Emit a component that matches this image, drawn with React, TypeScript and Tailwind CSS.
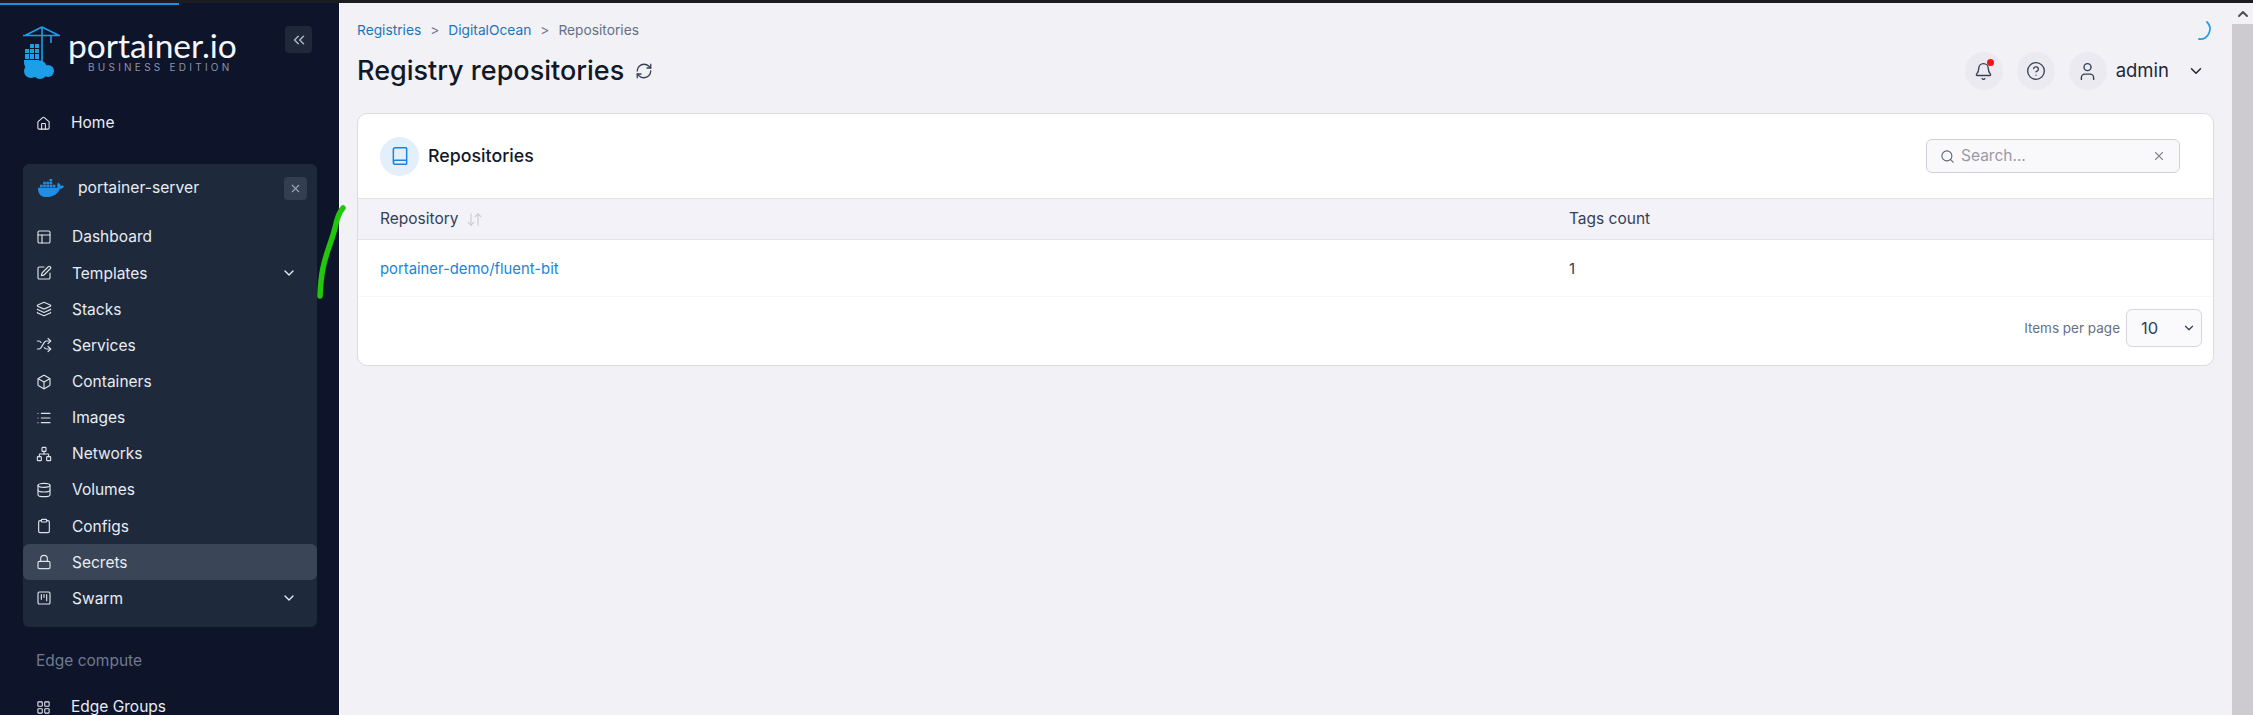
import React from "react";
import { Home, PanelsTopLeft, SquarePen, Layers, Shuffle, Box, List, Network, Database, Clipboard, Lock, SquareKanban, LayoutGrid, Book, RefreshCw, Bell, CircleHelp, User, ChevronDown, ChevronUp, Search, X, ChevronsLeft, ArrowDownUp } from "lucide-react";
import { FaDocker } from "react-icons/fa";

const items = [
  { label: "Dashboard", Icon: PanelsTopLeft },
  { label: "Templates", Icon: SquarePen, chevron: true },
  { label: "Stacks", Icon: Layers },
  { label: "Services", Icon: Shuffle },
  { label: "Containers", Icon: Box },
  { label: "Images", Icon: List },
  { label: "Networks", Icon: Network },
  { label: "Volumes", Icon: Database },
  { label: "Configs", Icon: Clipboard },
  { label: "Secrets", Icon: Lock, active: true },
  { label: "Swarm", Icon: SquareKanban, chevron: true },
];

function Logo() {
  return (
    <svg width="40" height="54" viewBox="0 0 40 54" className="shrink-0">
      <g stroke="#1d9fe8" strokeWidth="1.6" fill="none">
        <path d="M1 10.5H38M20 2V36M20 2L3 10.5M20 2L37 10.5M29 10V18" />
      </g>
      <g fill="#1d9fe8">
        <rect x="3" y="24" width="4" height="4" /><rect x="8" y="24" width="4" height="4" />
        <rect x="8" y="19" width="4" height="4" /><rect x="3" y="29" width="4" height="5" />
        <rect x="8" y="29" width="4" height="5" /><rect x="13" y="29" width="4" height="5" />
        <rect x="13" y="24" width="4" height="4" /><rect x="13" y="19" width="4" height="4" />
        <path d="M2 35h15v5a7 7 0 0 1-12 3c-3-1-3-5-3-8z" />
        <circle cx="18" cy="42" r="6.5" /><circle cx="9" cy="46" r="7" /><circle cx="18" cy="47" r="7" /><circle cx="26" cy="46" r="6" />
      </g>
    </svg>
  );
}

export default function App() {
  return (
    <div className="relative flex h-[715px] w-[2253px] flex-col overflow-hidden bg-[#f2f1f6] font-['Inter',sans-serif]">
      <div className="h-[3px] shrink-0 bg-[#1b1b20]" />
      <div className="flex min-h-0 flex-1">
        <aside className="relative w-[339px] shrink-0 overflow-hidden bg-[#0e152a] text-[#e8ecf3]">
          <div className="absolute left-0 top-0 h-[2px] w-[179px] bg-[#1d8fe0]" />
          <div className="flex h-[80px] items-start pl-[22px] pt-[22px]">
            <Logo />
            <div className="ml-[6px] flex w-[176px] flex-col">
              <span className="mt-[3px] font-['Lato',sans-serif] text-[33.5px] leading-[34px] text-[#f4f6fa]">portainer.io</span>
              <span className="ml-[20px] mt-[-1px] text-[10px] leading-[12px] tracking-[3.25px] text-[#8b93a7]">BUSINESS EDITION</span>
            </div>
            <button className="ml-[41px] mt-[1px] flex h-[27px] w-[27px] items-center justify-center rounded-[4px] bg-[#1f2838] text-[#aab2c2]"><ChevronsLeft size={18} /></button>
          </div>
          <div className="mt-[22px] flex h-[36px] items-center pl-[36px] text-[15.5px]">
            <Home size={15} strokeWidth={1.7} />
            <span className="ml-[20px]">Home</span>
          </div>
          <div className="mx-[23px] mt-[23px] h-[463px] w-[294px] rounded-[6px] bg-[#1e293b] pt-[2px]">
            <div className="flex h-[44px] items-center pl-[15px] pr-[10px]">
              <FaDocker size={26} className="text-[#1d8fe8]" />
              <span className="ml-[14px] text-[15.7px]">portainer-server</span>
              <button className="ml-auto flex h-[23px] w-[23px] items-center justify-center rounded-[4px] bg-[#333f50] text-[#9aa4b4]"><X size={13} /></button>
            </div>
            <div className="mt-[9px] flex flex-col">
              {items.map(({ label, Icon, chevron, active }) => (
                <div key={label} className={"flex h-[36.15px] items-center pl-[13px] pr-[20px] text-[15.5px] " + (active ? "rounded-[6px] bg-[#3a4557]" : "")}>
                  <Icon size={16} strokeWidth={1.7} className="text-[#dfe4ec]" />
                  <span className="ml-[20px]">{label}</span>
                  {chevron && <ChevronDown size={16} strokeWidth={2} className="ml-auto" />}
                </div>
              ))}
            </div>
          </div>
          <div className="mt-[22px] pl-[36px] text-[15.5px] leading-[24px] text-[#6f7a8f]">Edge compute</div>
          <div className="mt-[22px] flex h-[24px] items-center pl-[36px] text-[15.5px]">
            <LayoutGrid size={15} strokeWidth={1.7} />
            <span className="ml-[20px]">Edge Groups</span>
          </div>
        </aside>
        <div className="w-px shrink-0 bg-[#f9f9fb]" />
        <main className="relative min-w-0 flex-1 pl-[17px] pr-[18px]">
          <div className="flex h-[110px] items-start justify-between">
            <div>
              <div className="mt-[19px] flex h-[16px] items-center text-[13.75px] text-[#667085]">
                <span className="text-[#1b76bd]">Registries</span>
                <span className="mx-[9px] text-[#667085]">&gt;</span>
                <span className="text-[#1b76bd]">DigitalOcean</span>
                <span className="mx-[9px]">&gt;</span>
                <span>Repositories</span>
              </div>
              <div className="mt-[15px] flex items-center text-[#111827]">
                <span className="text-[27px] font-medium leading-[36px]">Registry repositories</span>
                <RefreshCw size={18} strokeWidth={1.7} className="ml-[11px] text-[#344054]" />
              </div>
            </div>
            <div className="mt-[49px] flex items-center text-[#344054]">
              <div className="relative flex h-[38px] w-[38px] items-center justify-center rounded-full bg-[#ebeaf0]">
                <Bell size={19} strokeWidth={1.7} />
                <span className="absolute right-[9px] top-[7px] h-[7px] w-[7px] rounded-full bg-[#f01414]" />
              </div>
              <div className="ml-[14px] flex h-[38px] w-[38px] items-center justify-center rounded-full bg-[#ebeaf0]">
                <CircleHelp size={20} strokeWidth={1.6} />
              </div>
              <div className="ml-[14px] flex h-[38px] w-[38px] items-center justify-center rounded-full bg-[#ebeaf0]">
                <User size={21} strokeWidth={1.6} />
              </div>
              <span className="ml-[9px] text-[18.5px] text-[#1f2937]">admin</span>
              <ChevronDown size={18} strokeWidth={2} className="ml-[18px] mr-[9px] text-[#1f2937]" />
            </div>
          </div>
          <section className="h-[253px] overflow-hidden rounded-[10px] border border-[#dcdae2] bg-white">
            <div className="flex h-[84px] items-center pl-[22px] pr-[33px]">
              <div className="flex h-[39px] w-[39px] items-center justify-center rounded-full bg-[#e3f0fb]">
                <Book size={20} strokeWidth={1.8} className="text-[#1b84d8]" />
              </div>
              <span className="ml-[9px] mt-[1px] text-[17.8px] font-medium text-[#111827]">Repositories</span>
              <div className="ml-auto flex h-[34px] w-[254px] items-center rounded-[6px] border border-[#d0d0da] bg-[#f9f9fc] pl-[13px] pr-[13px] text-[#80808c]">
                <Search size={15} strokeWidth={1.8} className="text-[#5f6570]" />
                <span className="ml-[6px] text-[15.5px] text-[#9a9aa5]">Search...</span>
                <X size={14} className="ml-auto text-[#8a8a95]" />
              </div>
            </div>
            <div className="grid h-[42px] grid-cols-[1189px_1fr] items-center border-y border-[#e3e2e8] bg-[#f3f2f8] px-[22px] text-[15.5px] text-[#344054]">
              <div className="flex items-center">
                <span>Repository</span>
                <ArrowDownUp size={17} strokeWidth={1.5} className="ml-[7px] text-[#c8c9d0]" />
              </div>
              <span>Tags count</span>
            </div>
            <div className="grid h-[57px] grid-cols-[1189px_1fr] items-center border-b border-[#f8f7fa] px-[22px] pt-[2px] text-[15px]">
              <span className="text-[14.8px] text-[#1b84d8]">portainer-demo/fluent-bit</span>
              <span className="text-[#344054]">1</span>
            </div>
            <div className="flex h-[68px] items-start justify-end pr-[11px] pt-[12px]">
              <span className="mt-[9px] text-[13.5px] text-[#667085]">Items per page</span>
              <div className="ml-[6px] flex h-[38px] w-[76px] items-center justify-between rounded-[6px] border border-[#d5d4dc] bg-[#fafafd] pl-[14px] pr-[5px] text-[16.5px] text-[#344054]">
                <span>10</span>
                <ChevronDown size={14} strokeWidth={2.2} />
              </div>
            </div>
          </section>
          <svg width="24" height="24" viewBox="0 0 24 24" className="absolute right-[15px] top-[15px] text-[#2a9de6]">
            <path d="M14 4A10 10 0 0 1 6 21" fill="none" stroke="currentColor" strokeWidth="1.8" strokeLinecap="round" />
          </svg>
        </main>
        <div className="flex w-[21px] shrink-0 flex-col">
          <div className="flex h-[21px] items-center justify-center bg-[#f2f1f6]">
            <ChevronUp size={16} strokeWidth={3} className="text-[#505055]" />
          </div>
          <div className="flex-1 bg-[#cdcbcf]" />
        </div>
      </div>
      <svg width="40" height="110" viewBox="0 0 40 110" className="pointer-events-none absolute left-[310px] top-[200px]">
        <path d="M33 8C29 12 27 18 25 28C23 36 20 44 18 50C14 62 11 72 10 96" fill="none" stroke="#22c70c" strokeWidth="5.5" strokeLinecap="round" />
      </svg>
    </div>
  );
}
